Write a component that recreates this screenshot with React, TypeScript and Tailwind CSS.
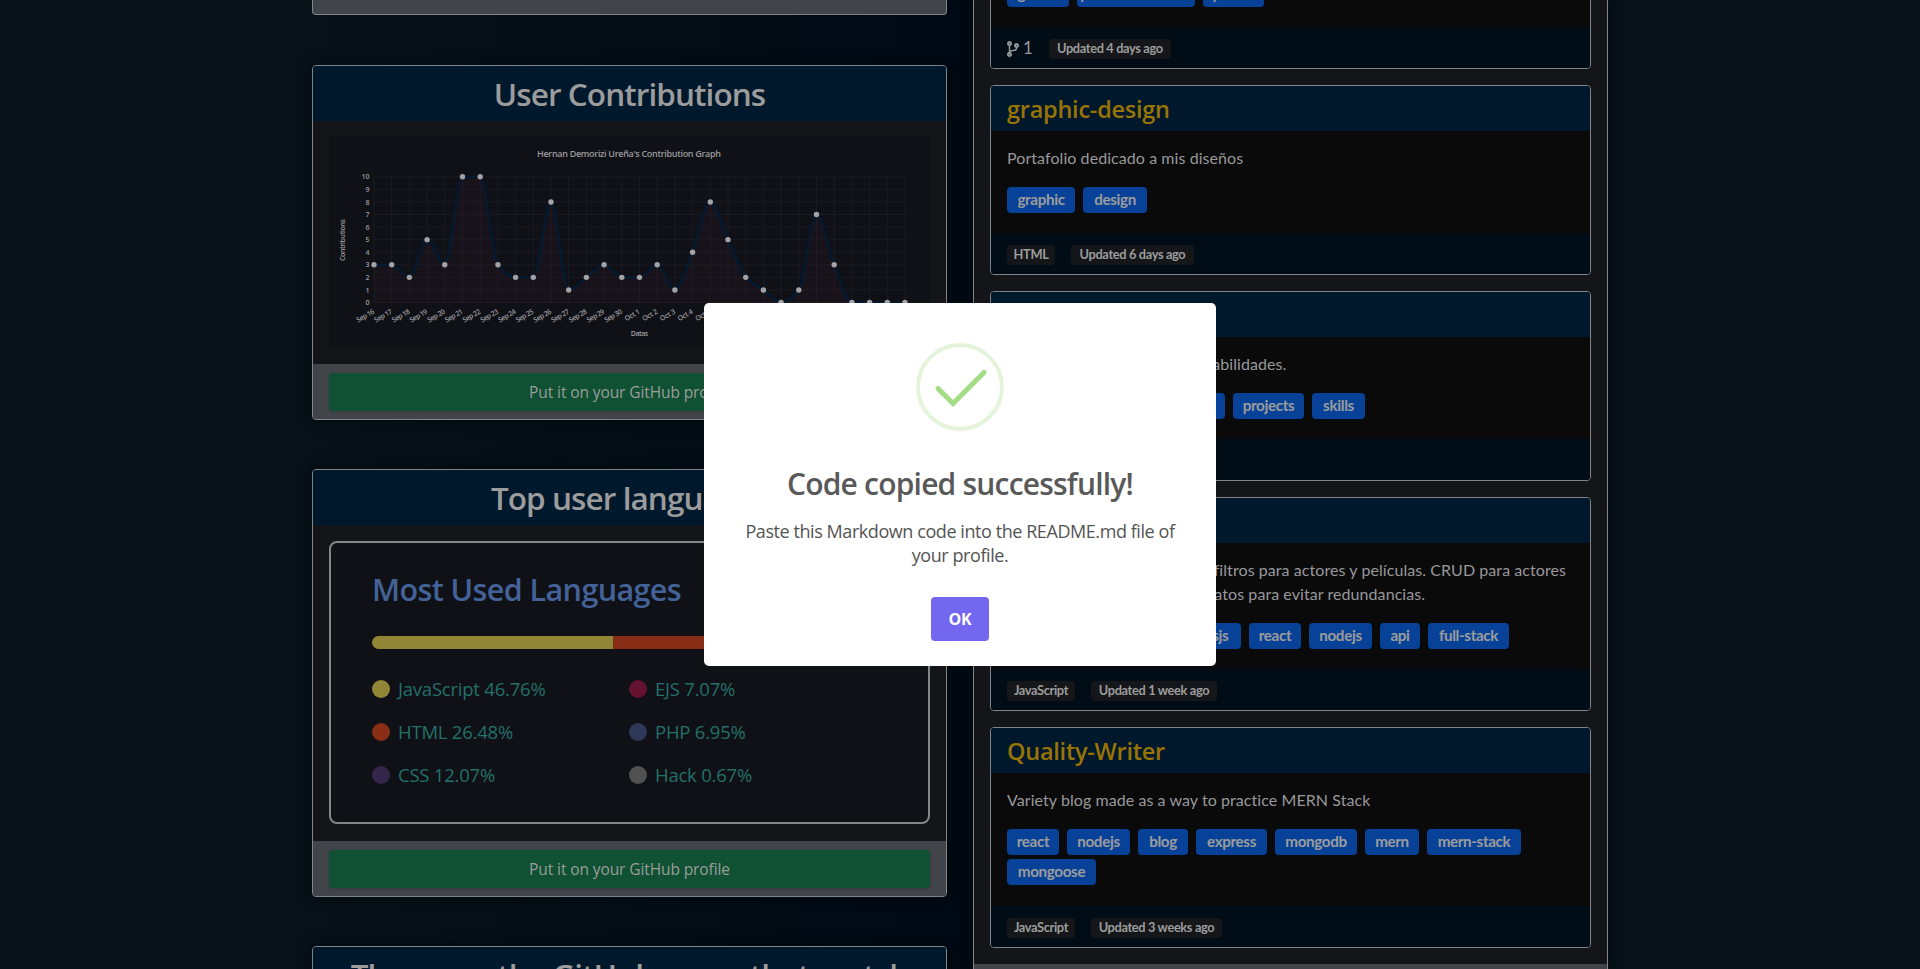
import React from "react";
import { FaCodeBranch } from "react-icons/fa";

const counts = [3, 3, 2, 5, 3, 10, 10, 3, 2, 2, 8, 1, 2, 3, 2, 2, 3, 1, 4, 8, 5, 2, 1, 0, 1, 7, 3, 0, 0, 0, 0];
const days = Array.from({ length: 31 }, (_, i) => (i < 15 ? `Sep ${16 + i}` : `Oct ${i - 14}`));
const px = (i: number) => 45 + i * 17.7;
const py = (v: number) => 165.5 - v * 12.57;

function curve() {
  let d = `M${px(0)} ${py(counts[0])}`;
  const n = counts.length;
  const slopes = counts.map((c, i) => {
    if (i === 0 || i === n - 1) return 0;
    const a = c - counts[i - 1];
    const b = counts[i + 1] - c;
    return a * b <= 0 ? 0 : (2 * a * b) / (a + b);
  });
  for (let i = 1; i < n; i++) {
    d += ` C${px(i - 1) + 5.9} ${py(counts[i - 1] + slopes[i - 1] / 3)} ${px(i) - 5.9} ${py(counts[i] - slopes[i] / 3)} ${px(i)} ${py(counts[i])}`;
  }
  return d;
}

function Graph() {
  const line = curve();
  return (
    <svg width="601" height="211" viewBox="0 0 601 211" className="block" fontFamily="'Open Sans', sans-serif">
      <rect width="601" height="211" rx="2" fill="#101017" />
      <text x="300" y="20" textAnchor="middle" fontSize="9" textLength="184" fill="#9a9a9c" fontWeight="600">
        Hernan Demorizi Ureña's Contribution Graph
      </text>
      <g stroke="#1b1a22" strokeWidth="1">
        {days.map((d, i) => (
          <line key={d} x1={px(i)} x2={px(i)} y1={py(10)} y2={py(0)} />
        ))}
        {Array.from({ length: 11 }, (_, v) => (
          <line key={v} x1={px(0)} x2={px(30)} y1={py(v)} y2={py(v)} />
        ))}
      </g>
      <path d={`${line} L${px(30)} ${py(0)} L${px(0)} ${py(0)} Z`} fill="#381a28" fillOpacity="0.22" />
      <path d={line} fill="none" stroke="#001b33" strokeWidth="2.2" />
      {counts.map((c, i) => (
        <circle key={i} cx={px(i)} cy={py(c)} r="2.7" fill="#a3a3a5" />
      ))}
      <g fontSize="7" fill="#9a9a9c" fontWeight="600">
        {Array.from({ length: 11 }, (_, v) => (
          <text key={v} x="40.5" y={py(v) + 2.6} textAnchor="end">
            {v}
          </text>
        ))}
        {days.map((d, i) => (
          <text key={d} transform={`translate(${px(i) + 1} 176) rotate(-30)`} textAnchor="end" textLength={i < 15 ? 19.5 : i > 23 ? 19 : 16.5}>
            {d}
          </text>
        ))}
        <text x="310.500" y="199" textAnchor="middle" textLength="17.500">
          Datas
        </text>
        <text transform="translate(16 103) rotate(-90)" textAnchor="middle" textLength="42">
          Contributions
        </text>
      </g>
    </svg>
  );
}

function ProfileButton() {
  return (
    <div className="h-[55px] bg-[#414449] px-4 pt-[9px]">
      <button className="block h-[38px] w-full rounded bg-[#0f5132] text-center font-['Open_Sans',sans-serif] text-[15.5px] leading-[38px] tracking-[-0.1px] text-[#9c9c9c] shadow-[0_1px_3px_rgba(0,0,0,0.15)]">
        Put it on your GitHub profile
      </button>
    </div>
  );
}

function Panel({ title, children, className }: { title: React.ReactNode; children?: React.ReactNode; className: string }) {
  return (
    <section className={`shrink-0 overflow-hidden rounded border border-[#7f8589] bg-[#141518] shadow-[0_0_14px_rgba(0,0,0,0.45)] ${className}`}>
      <h2 className="h-[55px] bg-[#00182c] text-center font-['Open_Sans',sans-serif] text-[31.5px] leading-[55px] font-semibold tracking-[-0.93px] whitespace-nowrap text-[#9c9c9c]">
        {title}
      </h2>
      {children}
    </section>
  );
}

const languages = [
  { name: "JavaScript 46.76%", dot: "bg-[#918636]" },
  { name: "EJS 7.07%", dot: "bg-[#651230]" },
  { name: "HTML 26.48%", dot: "bg-[#882e17]" },
  { name: "PHP 6.95%", dot: "bg-[#2f3859]" },
  { name: "CSS 12.07%", dot: "bg-[#34254a]" },
  { name: "Hack 0.67%", dot: "bg-[#515151]" },
];

type Tag = { name: string; width: string };

function Topic({ name, width }: Tag) {
  return (
    <span className={`h-[26px] shrink-0 rounded bg-[#084298] text-center text-[15.2px] leading-[25px] font-bold tracking-[-0.35px] whitespace-nowrap text-[#9c9c9c] ${width}`}>
      {name}
    </span>
  );
}

function Meta({ name, width }: Tag) {
  return (
    <span className={`h-5 shrink-0 rounded bg-[#141619] text-center text-[12.8px] leading-[19px] font-bold tracking-[-0.35px] whitespace-nowrap text-[#9c9c9c] ${width}`}>
      {name}
    </span>
  );
}

type RepoProps = {
  title: string;
  text: string[];
  topics: Tag[];
  meta: Tag[];
  bodyHeight: string;
  lead?: React.ReactNode;
};

function Repo({ title, text, topics, meta, bodyHeight, lead }: RepoProps) {
  return (
    <article className="flex shrink-0 flex-col overflow-hidden rounded border border-[#7f8589] bg-[#0a0a0b] font-['Lato',sans-serif]">
      <h3 className="h-[45px] bg-[#00182c] px-4 font-['Open_Sans',sans-serif] text-[23.5px] leading-[47px] font-semibold tracking-[-0.25px] text-[#997404]">{title}</h3>
      <div className={`px-4 pt-[15px] ${bodyHeight}`}>
        <div className="text-[16px] leading-6 tracking-[0.07px] whitespace-nowrap text-[#98989a]">
          {text.map((t) => (
            <p key={t}>{t}</p>
          ))}
        </div>
        <div className="mt-[17px] flex flex-wrap gap-x-2 gap-y-1">
          {topics.map((t) => (
            <Topic key={t.name} {...t} />
          ))}
        </div>
      </div>
      <div className="flex h-[41px] items-center gap-4 bg-[#000d17] px-4 pt-[3px]">
        {lead}
        {meta.map((m) => (
          <Meta key={m.name} {...m} />
        ))}
      </div>
    </article>
  );
}

function Forks() {
  return (
    <span className="flex h-6 items-center gap-1 text-[17px] text-[#98989a]">
      <FaCodeBranch className="h-4 w-3" />
      <span className="-mt-0.5">1</span>
    </span>
  );
}

function Modal() {
  return (
    <div className="absolute top-[303px] left-[704px] flex h-[363px] w-[512px] flex-col items-center rounded-[5px] bg-white pt-10 font-['Open_Sans',sans-serif]">
      <svg width="88" height="88" viewBox="0 0 88 88" fill="none">
        <circle cx="44" cy="44" r="42" stroke="#e4f4da" strokeWidth="4" />
        <path d="M22 45.500L37 60.500L68 29.500" stroke="#a5dc86" strokeWidth="5" strokeLinecap="round" strokeLinejoin="miter" />
      </svg>
      <h2 className="mt-[33px] h-10 text-[30px] leading-10 font-semibold tracking-[-0.8px] whitespace-nowrap text-[#595959]">Code copied successfully!</h2>
      <p className="mt-[15px] text-center text-[18px] leading-6 tracking-[-0.43px] whitespace-nowrap text-[#545454]">
        Paste this Markdown code into the README.md file of
        <br />
        your profile.
      </p>
      <button className="mt-[30px] h-11 w-[58px] rounded bg-[#7367f0] text-[16px] font-bold tracking-[-0.3px] text-white">OK</button>
    </div>
  );
}

export default function App() {
  return (
    <div className="relative flex h-[969px] w-[1920px] overflow-hidden bg-[linear-gradient(90deg,#061118_0%,#061118_15%,#000a14_48%,#000a14_52%,#061118_85%,#061118_100%)]">
      <main className="ml-[312px] flex h-[969px] gap-[26px]">
        <div className="flex w-[635px] flex-col">
          <div className="h-[15px] shrink-0 rounded-b border border-t-0 border-[#7f8589] bg-[#414449]" />
          <Panel className="mt-[50px] h-[355px]" title="User Contributions">
            <div className="h-[243px] px-4 pt-4">
              <Graph />
            </div>
            <ProfileButton />
          </Panel>
          <Panel className="mt-[49px] h-[428px]" title="Top user languages">
            <div className="h-[316px] px-4 pt-4">
              <div className="h-[283px] w-[601px] rounded-lg border-2 border-[#858587] bg-[#101017] px-[41px] pt-[26px] font-['Open_Sans',sans-serif]">
                <h3 className="h-10 text-[30.5px] leading-10 font-semibold tracking-[-0.6px] whitespace-nowrap text-[#436398]">Most Used Languages</h3>
                <div className="mt-[27px] flex h-[13px] w-[515px] overflow-hidden rounded-full">
                  <div className="w-[241px] bg-[#918636]" />
                  <div className="w-[136px] bg-[#882e17]" />
                  <div className="w-[62px] bg-[#34254a]" />
                  <div className="w-[36px] bg-[#651230]" />
                  <div className="flex-1 bg-[#2f3859]" />
                </div>
                <ul className="mt-[18px] grid w-[515px] grid-cols-[257px_258px]">
                  {languages.map((l) => (
                    <li key={l.name} className="flex h-[43px] items-center gap-2 text-[18.500px] tracking-[-0.22px] whitespace-nowrap text-[#227168]">
                      <span className={`size-[18px] rounded-full ${l.dot}`} />
                      {l.name}
                    </li>
                  ))}
                </ul>
              </div>
            </div>
            <ProfileButton />
          </Panel>
          <Panel className="mt-[49px] h-[355px]" title="These are the GitHub repos that match" />
        </div>

        <div className="flex w-[635px] flex-col border-x border-[#7f8589] bg-[#141518] shadow-[0_0_14px_rgba(0,0,0,0.45)]">
          <div className="-mt-[121px] flex flex-col gap-4 px-4 pb-4">
            <Repo
              title="portfolio-github"
              text={["Portafolio"]}
              bodyHeight="h-[102px]"
              topics={[
                { name: "github", width: "w-[62px]" },
                { name: "portfolio-website", width: "w-[118px]" },
                { name: "profile", width: "w-[61px]" },
              ]}
              lead={<Forks />}
              meta={[{ name: "Updated 4 days ago", width: "w-[122px]" }]}
            />
            <Repo
              title="graphic-design"
              text={["Portafolio dedicado a mis diseños"]}
              bodyHeight="h-[102px]"
              topics={[
                { name: "graphic", width: "w-[68px]" },
                { name: "design", width: "w-[64px]" },
              ]}
              meta={[
                { name: "HTML", width: "w-[48px]" },
                { name: "Updated 6 days ago", width: "w-[123px]" },
              ]}
            />
            <Repo
              title="portfolio"
              text={["Portafolio de mis trabajos y habilidades."]}
              bodyHeight="h-[102px]"
              topics={[
                { name: "portfolio", width: "w-[218px]" },
                { name: "projects", width: "w-[71px]" },
                { name: "skills", width: "w-[53px]" },
              ]}
              meta={[]}
            />
            <Repo
              title="movies"
              text={["Catálogo de las películas con filtros para actores y películas. CRUD para actores", "y validaciones de la base de datos para evitar redundancias."]}
              bodyHeight="h-[126px]"
              topics={[
                { name: "javascript", width: "w-[85px]" },
                { name: "html", width: "w-[49px]" },
                { name: "expressjs", width: "w-[84px]" },
                { name: "react", width: "w-[52px]" },
                { name: "nodejs", width: "w-[63px]" },
                { name: "api", width: "w-[40px]" },
                { name: "full-stack", width: "w-[81px]" },
              ]}
              meta={[
                { name: "JavaScript", width: "w-[68px]" },
                { name: "Updated 1 week ago", width: "w-[126px]" },
              ]}
            />
            <Repo
              title="Quality-Writer"
              text={["Variety blog made as a way to practice MERN Stack"]}
              bodyHeight="h-[133px]"
              topics={[
                { name: "react", width: "w-[52px]" },
                { name: "nodejs", width: "w-[63px]" },
                { name: "blog", width: "w-[50px]" },
                { name: "express", width: "w-[71px]" },
                { name: "mongodb", width: "w-[82px]" },
                { name: "mern", width: "w-[54px]" },
                { name: "mern-stack", width: "w-[94px]" },
                { name: "mongoose", width: "w-[89px]" },
              ]}
              meta={[
                { name: "JavaScript", width: "w-[68px]" },
                { name: "Updated 3 weeks ago", width: "w-[131px]" },
              ]}
            />
          </div>
          <div className="flex-1 bg-[#414449]" />
        </div>
      </main>
      <Modal />
    </div>
  );
}
